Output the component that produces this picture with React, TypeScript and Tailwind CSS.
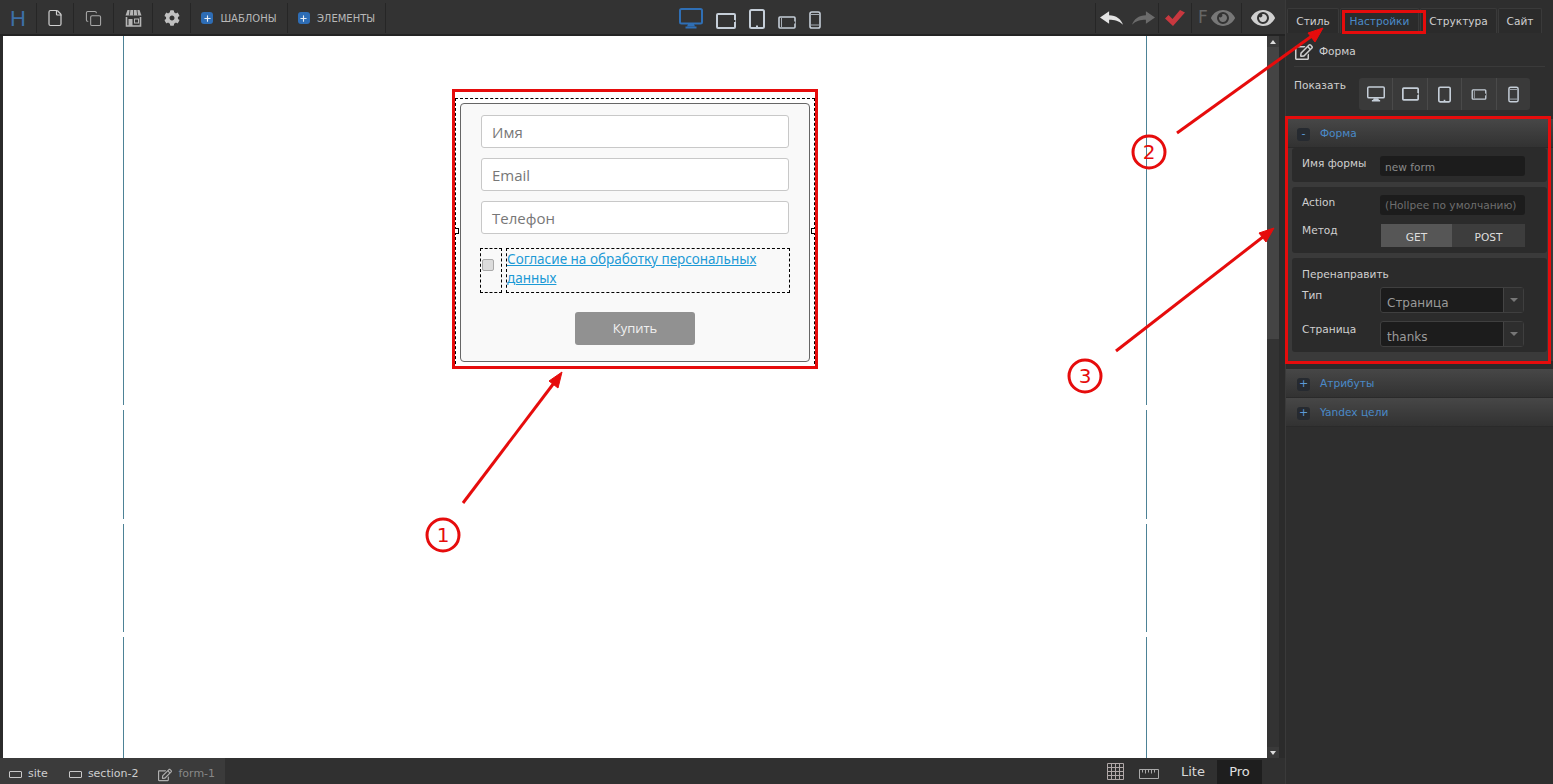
import React from "react";
import { FaCog, FaEye, FaRegEdit } from "react-icons/fa";
import { File, Copy, Plus } from "lucide-react";

const Monitor = ({ c = "#c5ced8", w = 24, h = 21 }: { c?: string; w?: number; h?: number }) => (
  <svg width={w} height={h} viewBox="0 0 24 21" fill="none">
    <rect x="1" y="1" width="22" height="14.5" rx="1.5" stroke={c} strokeWidth="2" />
    <path d="M9 16h6l1 2.5H8z" fill={c} />
    <rect x="6.5" y="18.5" width="11" height="2" fill={c} />
  </svg>
);
const TabletL = ({ c = "#c5ced8", w = 20, h = 16 }: { c?: string; w?: number; h?: number }) => (
  <svg width={w} height={h} viewBox="0 0 20 16" fill="none">
    <rect x="1" y="1" width="18" height="14" rx="1" stroke={c} strokeWidth="2" />
    <rect x="17.3" y="7" width="2" height="2" fill="#333" />
  </svg>
);
const TabletP = ({ c = "#c5ced8", w = 16, h = 20 }: { c?: string; w?: number; h?: number }) => (
  <svg width={w} height={h} viewBox="0 0 16 20" fill="none">
    <rect x="1" y="1" width="14" height="18" rx="1.5" stroke={c} strokeWidth="2" />
    <rect x="7" y="16.5" width="2" height="2" fill={c} />
  </svg>
);
const PhoneL = ({ c = "#c5ced8", w = 18, h = 13 }: { c?: string; w?: number; h?: number }) => (
  <svg width={w} height={h} viewBox="0 0 18 13" fill="none">
    <rect x="1" y="1" width="16" height="11" rx="1" stroke={c} strokeWidth="1.6" />
    <path d="M3.5 2v9" stroke={c} strokeWidth="0.8" />
    <rect x="15.6" y="5.5" width="1.6" height="2" fill="#333" />
  </svg>
);
const PhoneP = ({ c = "#c5ced8", w = 12, h = 18 }: { c?: string; w?: number; h?: number }) => (
  <svg width={w} height={h} viewBox="0 0 12 18" fill="none">
    <rect x="1" y="1" width="10" height="16" rx="1.8" stroke={c} strokeWidth="1.6" />
    <path d="M2 3.5h8M2 14h8" stroke={c} strokeWidth="0.8" />
  </svg>
);
const Shop = () => (
  <svg width="17" height="18" viewBox="0 0 17 18" fill="none">
    <path d="M2.5 1h12l2 5.5H.5z" fill="#b5b5b5" />
    <path d="M5 1 4.3 6.5M8.5 1v5.5M12 1l.7 5.5" stroke="#333" strokeWidth="0.8" />
    <path d="M1.5 8V17h14V8" stroke="#b5b5b5" strokeWidth="1.6" />
    <rect x="3.5" y="10" width="4" height="7" fill="#b5b5b5" />
    <rect x="9.5" y="10" width="4" height="4" stroke="#b5b5b5" strokeWidth="1" />
  </svg>
);
const Arrow = ({ c, flip }: { c: string; flip?: boolean }) => (
  <svg width="23" height="14" viewBox="0 0 24 14" className={flip ? "-scale-x-100" : ""}>
    <path d="M0 6.5 9.5 0v4C17 4 22 8 24 14c-4-4-9-5.2-14.5-5.2V13z" fill={c} />
  </svg>
);
const Check = () => (
  <svg width="20" height="16" viewBox="0 0 20 16">
    <path d="M0 8.5 3.5 5 7.5 9 15 0l5 2.5L8 16z" fill="#c8383f" />
  </svg>
);
const PlusBox = () => (
  <span className="flex h-[12px] w-[12px] items-center justify-center rounded-[3px] bg-[#2e6db5]">
    <Plus size={9} strokeWidth={3} color="#e8eef5" />
  </span>
);
const Tab = ({ w, active, children }: { w: string; active?: boolean; children: React.ReactNode }) => (
  <div className={`${w} flex h-[25px] items-center justify-center rounded-t-[2px] border-x border-t border-[#3a3a3a] pt-[2px] ${active ? "text-[#4a8ac8]" : "text-[#d0d0d0]"} bg-[#2b2b2b]`}>
    {children}
  </div>
);
const Header = ({ sign, title, cls }: { sign: string; title: string; cls: string }) => (
  <div className={`${cls} flex items-center gap-[10px] border-b border-[#2a2a2a] bg-gradient-to-b from-[#474747] to-[#323232] pl-[11px] pt-[2px]`}>
    <span className="flex h-[13px] w-[13px] items-center justify-center rounded-[3px] bg-[#262a30] text-[11px] text-[#5c9ad8]">{sign}</span>
    <span className="text-[#4a8ac8]">{title}</span>
  </div>
);
const Select = ({ value }: { value: string }) => (
  <div className="flex h-[26px] w-[144px] rounded-[3px] border border-[#3f3f3f] bg-[#1c1c1c]">
    <div className="flex flex-1 items-center pl-[6px] pt-[6px] text-[12px] text-[#9a9a9a]">{value}</div>
    <div className="flex w-[20px] items-center justify-center border-l border-[#444] bg-[#2e2e2e]">
      <span className="h-0 w-0 border-x-[4px] border-t-[4px] border-x-transparent border-t-[#777]" />
    </div>
  </div>
);

const Guide = ({ cls }: { cls: string }) => (
  <div className={`${cls} absolute top-0 bottom-0 flex w-px flex-col bg-[#4d8296]`}>
    <div className="mt-[369px] h-[5px] bg-white" />
    <div className="mt-[109px] h-[5px] bg-white" />
    <div className="mt-[108px] h-[5px] bg-white" />
  </div>
);

const TopCell = ({ w, children }: { w: string; children: React.ReactNode }) => (
  <div className={`${w} flex h-[30px] items-center justify-center border-r border-[#262626]`}>{children}</div>
);

export default function App() {
  return (
    <div className="relative flex h-[784px] w-[1553px] overflow-hidden bg-[#2b2b2b] font-['DejaVu_Sans',sans-serif]">
      <div className="flex w-[1285px] flex-col">
        {/* top bar */}
        <div className="flex h-[36px] items-center border-b-2 border-[#232323] bg-[#333333] pt-[2px] text-[10px] text-[#b8b8b8]">
          <TopCell w="w-[37px]"><span className="font-['Liberation_Sans',sans-serif] text-[22px] font-normal text-[#3d6fa8]">H</span></TopCell>
          <TopCell w="w-[37px]"><File size={18} color="#d0d0d0" strokeWidth={1.6} /></TopCell>
          <TopCell w="w-[40px]"><Copy size={17} color="#a8a8a8" strokeWidth={1.5} /></TopCell>
          <TopCell w="w-[39px]"><Shop /></TopCell>
          <TopCell w="w-[38px]"><FaCog size={16} color="#c0c0c0" /></TopCell>
          <TopCell w="w-[97px]"><div className="flex items-center gap-[7px]"><PlusBox /><span>ШАБЛОНЫ</span></div></TopCell>
          <TopCell w="w-[98px]"><div className="flex items-center gap-[7px]"><PlusBox /><span>ЭЛЕМЕНТЫ</span></div></TopCell>
          <div className="ml-[293px] flex h-[21px] items-end gap-[13px]">
            <Monitor c="#2f6fb5" />
            <TabletL />
            <TabletP />
            <PhoneL />
            <PhoneP />
          </div>
          <div className="ml-[274px] flex items-center">
            <div className="flex h-[30px] w-[64px] items-center justify-center gap-[9px] border-x border-[#262626]">
              <Arrow c="#e4e4e4" />
              <Arrow c="#6b6b6b" flip />
            </div>
            <TopCell w="w-[33px]"><Check /></TopCell>
            <TopCell w="w-[50px]">
              <div className="flex items-center gap-[3px]">
                <span className="text-[17px] text-[#666]">F</span>
                <FaEye size={24} color="#777" />
              </div>
            </TopCell>
            <div className="flex w-[42px] justify-center"><FaEye size={24} color="#d0d0d0" /></div>
          </div>
        </div>
        {/* canvas row */}
        <div className="flex min-h-0 flex-1 pl-[3px]">
          <div className="relative w-[1264px] bg-white">
            <Guide cls="left-[120px]" />
            <Guide cls="left-[1143px]" />
            <div className="relative mx-auto mt-[62px] h-[271px] w-[360px] border border-dashed border-black bg-white p-[4px]">
              <span className="absolute -left-[3px] top-[129px] h-[6px] w-[6px] border border-black bg-white" />
              <span className="absolute -right-[2px] top-[129px] h-[6px] w-[5px] border border-black bg-white" />
              <div className="flex h-[259px] w-[350px] flex-col items-start rounded-[4px] border border-[#666] bg-[#f9f9f9] pl-[20px] pt-[11px] font-['Open_Sans',sans-serif]">
                <div className="flex h-[33px] w-[308px] items-center rounded-[3px] border border-[#c8c8c8] bg-white pl-[10px] pt-[2px] text-[15px] text-[#777]">Имя</div>
                <div className="mt-[10px] flex h-[33px] w-[308px] items-center rounded-[3px] border border-[#c8c8c8] bg-white pl-[10px] pt-[2px] text-[15px] text-[#777]">Email</div>
                <div className="mt-[10px] flex h-[33px] w-[308px] items-center rounded-[3px] border border-[#c8c8c8] bg-white pl-[10px] pt-[2px] text-[15px] text-[#777]">Телефон</div>
                <div className="-ml-px mt-[14px] flex h-[45px] gap-[4px]">
                  <div className="flex w-[22px] items-start border border-dashed border-black pl-[1px] pt-[10px]">
                    <span className="h-[12px] w-[12px] rounded-[2px] border border-[#aaa] bg-[#dcdcdc]" />
                  </div>
                  <div className="w-[284px] border border-dashed border-black pt-px font-['Noto_Sans',sans-serif] text-[13.5px] leading-[19px] text-[#1c9ad6] underline">
                    Согласие на обработку персональных данных
                  </div>
                </div>
                <div className="ml-[94px] mt-[19px] flex h-[33px] w-[120px] items-center justify-center rounded-[3px] bg-[#919191] text-[13px] text-[#f0f0f0]">Купить</div>
              </div>
            </div>
          </div>
          <div className="flex w-[12px] flex-col bg-[#333333]">
            <div className="flex h-[11px] items-center justify-center bg-[#3a3a3a]"><span className="h-0 w-0 border-x-[3px] border-b-[4px] border-x-transparent border-b-[#ddd]" /></div>
            <div className="h-[292px] bg-[#444444]" />
            <div className="flex-1" />
            <div className="flex h-[11px] items-center justify-center bg-[#3a3a3a]"><span className="h-0 w-0 border-x-[3px] border-t-[4px] border-x-transparent border-t-[#ddd]" /></div>
          </div>
        </div>
        {/* bottom bar */}
        <div className="flex h-[26px] items-center bg-[#303030] text-[11px] text-[#cfcfcf]">
          <div className="flex h-full w-[225px] items-center bg-[#3b3b3b] pl-[9px] pt-[7px]">
            <span className="h-[7px] w-[13px] rounded-[1px] border border-[#c8c8c8]" />
            <span className="ml-[6px]">site</span>
            <span className="ml-[21px] h-[7px] w-[13px] rounded-[1px] border border-[#c8c8c8]" />
            <span className="ml-[6px]">section-2</span>
            <span className="ml-[20px]"><FaRegEdit size={14} color="#b0b0b0" /></span>
            <span className="ml-[6px] text-[#888]">form-1</span>
          </div>
          <div className="ml-[882px]">
            <svg width="17" height="17" viewBox="0 0 17 17" stroke="#b0a8a8" strokeWidth="1" fill="none" className="block">
              <path d="M.5.5h16v16H.5zM4.5.5v16M8.5.5v16M12.5.5v16M.5 4.5h16M.5 8.5h16M.5 12.5h16" />
            </svg>
          </div>
          <div className="ml-[15px] mt-[6px]">
            <svg width="20" height="10" viewBox="0 0 20 10" stroke="#aaa" strokeWidth="1" fill="none" className="block">
              <path d="M.5.5h19v9H.5zM3.5.5v3M6.5.5v4M9.5.5v3M12.5.5v4M15.5.5v3" />
            </svg>
          </div>
          <span className="ml-[22px] pt-[2px] text-[13px] text-[#d8d8d8]">Lite</span>
          <div className="ml-[12px] flex h-[24px] w-[45px] items-center justify-center self-end bg-[#1e1e1e] text-[13px] text-[#e0e0e0]">Pro</div>
        </div>
      </div>

      {/* right panel */}
      <div className="flex w-[268px] flex-col border-l border-[#3a3a3a] bg-[#2e2e2e] text-[10.6px] text-[#d0d0d0]">
        <div className="flex items-end gap-px pl-[1px] pt-[8px]">
          <Tab w="w-[52px]">Стиль</Tab>
          <Tab w="w-[79px]" active>Настройки</Tab>
          <Tab w="w-[77px]">Структура</Tab>
          <Tab w="w-[44px]">Сайт</Tab>
        </div>
        <div className="mx-[8px] flex h-[34px] items-center gap-[6px] border-b border-[#3a3a3a] pl-[1px] pt-[4px]">
          <FaRegEdit size={18} color="#cfcfcf" />
          <span>Форма</span>
        </div>
        <div className="flex items-start pl-[8px] pt-[11px]">
          <span className="w-[65px]">Показать</span>
          <div className="flex h-[32px] w-[171px] rounded-[3px] bg-[#3a3a3a]">
            <div className="flex flex-1 items-center justify-center border-r border-[#4a4a4a]"><Monitor w={18} h={16} /></div>
            <div className="flex flex-1 items-center justify-center border-r border-[#4a4a4a]"><TabletL w={17} h={14} /></div>
            <div className="flex flex-1 items-center justify-center border-r border-[#4a4a4a]"><TabletP w={13} h={17} /></div>
            <div className="flex flex-1 items-center justify-center border-r border-[#4a4a4a]"><PhoneL w={16} h={11} /></div>
            <div className="flex flex-1 items-center justify-center"><PhoneP w={11} h={17} /></div>
          </div>
        </div>
        <Header cls="mt-[9px] h-[29px]" sign="-" title="Форма" />
        <div className="flex h-[213px] flex-col gap-[5px] bg-[#3a3a3a] pl-[6px] pr-[6px]">
          <div className="flex h-[34px] items-start rounded-[3px] bg-[#2b2b2b] pl-[10px] pt-[8px]">
            <span className="w-[78px] leading-[14px]">Имя формы</span>
            <div className="flex h-[20px] w-[145px] items-center rounded-[3px] bg-[#1c1c1c] pl-[5px] pt-[4px] text-[#8a8a8a]">new form</div>
          </div>
          <div className="flex h-[66px] flex-col rounded-[3px] bg-[#2b2b2b] pl-[10px] pt-[8px]">
            <div className="flex items-start">
              <span className="w-[78px] leading-[14px]">Action</span>
              <div className="flex h-[20px] w-[145px] items-center overflow-hidden whitespace-nowrap rounded-[3px] bg-[#1c1c1c] pl-[5px] pt-[2px] text-[#6e6e6e]">(Hollpee по умолчанию)</div>
            </div>
            <div className="mt-[9px] flex items-start">
              <span className="w-[79px] -translate-y-px leading-[14px]">Метод</span>
              <div className="flex h-[23px] w-[144px]">
                <div className="flex w-[71px] items-center justify-center bg-[#565656] pt-[5px] text-[#dedede]">GET</div>
                <div className="flex flex-1 items-center justify-center bg-[#3d3d3d] pt-[5px] text-[#dedede]">POST</div>
              </div>
            </div>
          </div>
          <div className="flex h-[94px] flex-col rounded-[3px] bg-[#2b2b2b] pl-[10px] pt-[9px]">
            <span className="leading-[14px]">Перенаправить</span>
            <div className="mt-[6px] flex items-start">
              <span className="mt-[1px] w-[78px] leading-[14px]">Тип</span>
              <Select value="Страница" />
            </div>
            <div className="mt-[8px] flex items-start">
              <span className="mt-[1px] w-[78px] leading-[14px]">Страница</span>
              <Select value="thanks" />
            </div>
          </div>
        </div>
        <div className="h-[8px] bg-[#2b2b2b]" />
        <Header cls="h-[29px]" sign="+" title="Атрибуты" />
        <Header cls="h-[29px]" sign="+" title="Yandex цели" />
      </div>

      {/* annotations */}
      <svg className="pointer-events-none absolute inset-0" width="1553" height="784" fill="none" stroke="#e60c0c">
        <rect x="453.5" y="90.5" width="363" height="277" strokeWidth="3" />
        <rect x="1343.5" y="11.5" width="81" height="21" strokeWidth="3" />
        <rect x="1286.5" y="117.5" width="263" height="245" strokeWidth="3" />
        <path d="M463 503 557 379" strokeWidth="3" />
        <path d="M562 372 549 381 558 388z" fill="#e60c0c" strokeWidth="1" />
        <path d="M1177 133 1316 33" strokeWidth="3" />
        <path d="M1323 28 1308 33 1315 42z" fill="#e60c0c" strokeWidth="1" />
        <path d="M1116 351 1268 233" strokeWidth="3" />
        <path d="M1274 228 1259 233 1266 242z" fill="#e60c0c" strokeWidth="1" />
        <circle cx="443" cy="535" r="16" strokeWidth="3" />
        <circle cx="1149" cy="152" r="16" strokeWidth="3" />
        <circle cx="1085" cy="376" r="16" strokeWidth="3" />
        <g fill="#e60c0c" stroke="none" fontSize="20" textAnchor="middle" fontFamily="DejaVu Sans, sans-serif">
          <text x="443" y="542">1</text>
          <text x="1149" y="159">2</text>
          <text x="1085" y="383">3</text>
        </g>
      </svg>
    </div>
  );
}
